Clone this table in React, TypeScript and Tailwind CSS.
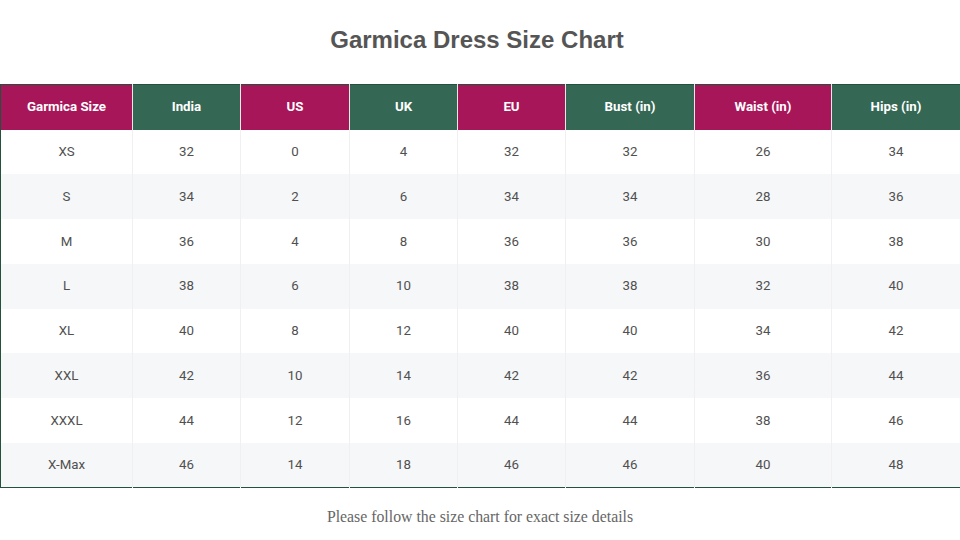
import React from "react";

const headers = ["Garmica Size", "India", "US", "UK", "EU", "Bust (in)", "Waist (in)", "Hips (in)"];
const widths = [132, 108, 109, 108, 108, 129, 137, 129];
const rows = [
  ["XS", "32", "0", "4", "32", "32", "26", "34"],
  ["S", "34", "2", "6", "34", "34", "28", "36"],
  ["M", "36", "4", "8", "36", "36", "30", "38"],
  ["L", "38", "6", "10", "38", "38", "32", "40"],
  ["XL", "40", "8", "12", "40", "40", "34", "42"],
  ["XXL", "42", "10", "14", "42", "42", "36", "44"],
  ["XXXL", "44", "12", "16", "44", "44", "38", "46"],
  ["X-Max", "46", "14", "18", "46", "46", "40", "48"],
];

export default function App() {
  return (
    <div className="w-[960px] h-[540px] bg-white flex flex-col overflow-hidden">
      <div className="h-[84px] flex justify-center pt-[22px]">
        <h1 className="text-[24px] leading-[36px] font-bold text-[#555555] [font-family:'Liberation_Sans',Arial,sans-serif] -translate-x-[3px]">
          Garmica Dress Size Chart
        </h1>
      </div>
      <table className="w-[960px] border-collapse table-fixed border-t border-b border-l border-[#24513d] [font-family:Roboto,sans-serif]">
        <colgroup>
          {widths.map((w, i) => (
            <col key={i} style={{ width: w }} />
          ))}
        </colgroup>
        <thead>
          <tr className="h-[45px]">
            {headers.map((h, i) => (
              <th
                key={h}
                className={`text-[13.3px] font-bold text-white text-center p-0 border-r border-r-[#e8e8e8] ${
                  i % 2 === 0 ? "bg-[#a8165a]" : "bg-[#346855]"
                }`}
              >
                {h}
              </th>
            ))}
          </tr>
        </thead>
        <tbody>
          {rows.map((r, ri) => (
            <tr key={ri} className={`h-[44.8px] ${ri % 2 === 1 ? "bg-[#f6f7f9]" : "bg-white"}`}>
              {r.map((c, ci) => (
                <td
                  key={ci}
                  className="text-[13.3px] font-normal text-[#505050] text-center p-0 border-r border-[#f0f0f2]"
                >
                  {c}
                </td>
              ))}
            </tr>
          ))}
        </tbody>
      </table>
      <div className="flex-1 flex justify-center pt-[19px]">
        <p className="text-[15.8px] leading-[20px] text-[#666666] [font-family:'Liberation_Serif','Times_New_Roman',serif]">
          Please follow the size chart for exact size details
        </p>
      </div>
    </div>
  );
}
